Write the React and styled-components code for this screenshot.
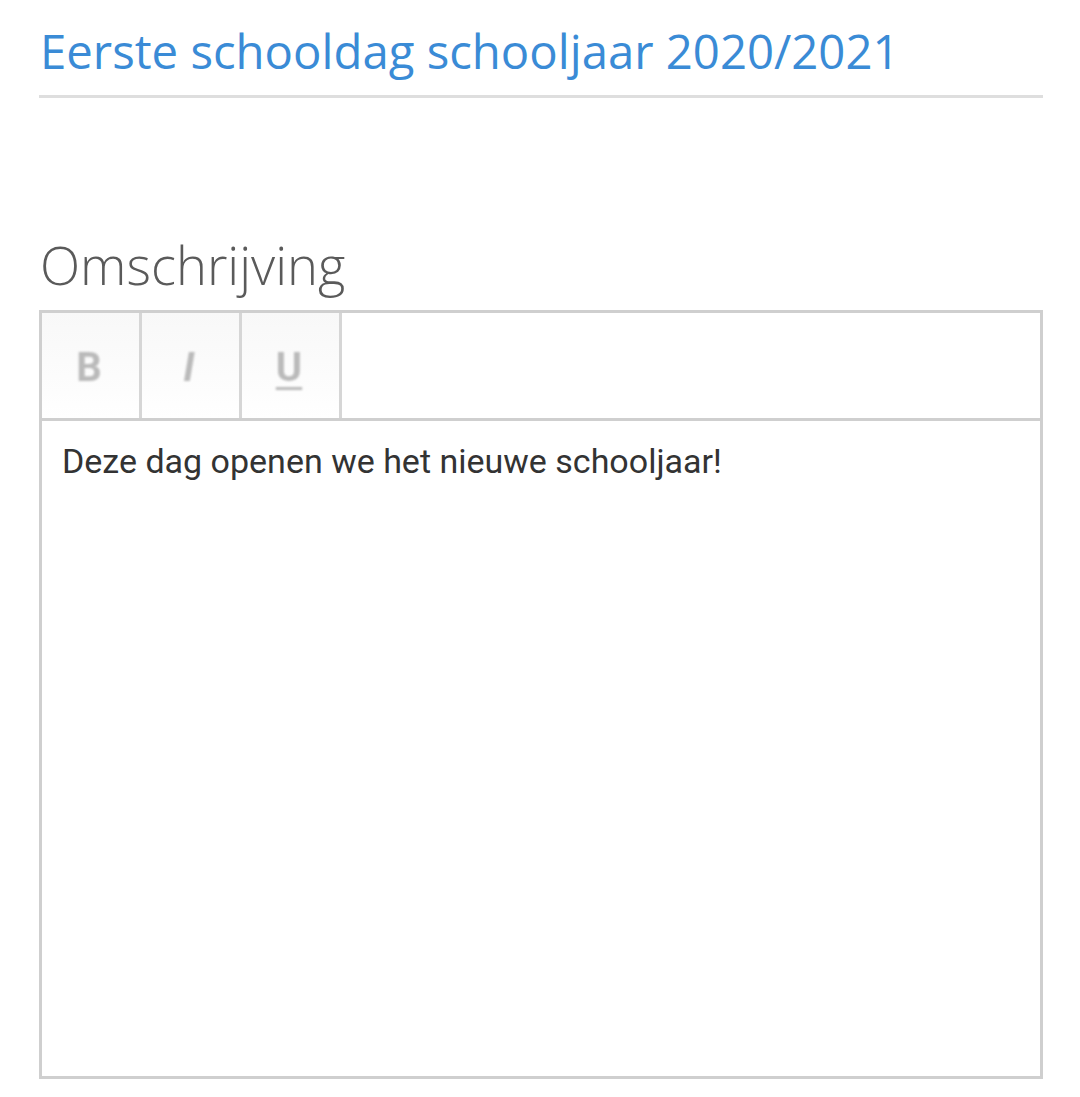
import React from "react";
import styled, { createGlobalStyle } from "styled-components";

const GlobalStyle = createGlobalStyle`
	html, body {
		margin: 0;
		padding: 0;
		background: #fff;
	}
`;

// страница с заголовком и редактором
const Page = styled.div`
	padding: 21px 37px 0 39px;
	font-family: "Open Sans", "Liberation Sans", sans-serif;
`;

const Title = styled.h1`
	margin: 0;
	padding: 0 0 14px 1px;
	font-size: 47.3px;
	line-height: 60px;
	font-weight: 400;
	color: #3a8bd6;
	border-bottom: 3px solid #dedede;
`;

const Label = styled.h2`
	margin: 134px 0 0 0;
	padding-left: 1px;
	font-size: 52.5px;
	line-height: 66px;
	font-weight: 300;
	color: #5a5a5a;
`;

const Editor = styled.div`
	margin-top: 12px;
	height: 769px;
	box-sizing: border-box;
	border: 3px solid #cfcfcf;
	display: flex;
	flex-direction: column;
`;

const Toolbar = styled.div`
	display: flex;
	height: 105px;
	border-bottom: 3px solid #cfcfcf;
`;

const ToolButton = styled.button`
	width: 100px;
	height: 105px;
	padding: 0;
	border: none;
	border-right: 3px solid #d6d6d6;
	background: linear-gradient(#f8f8f8, #fdfdfd 75%, #fff);
	display: flex;
	align-items: center;
	justify-content: center;
	font-family: "Roboto", "Liberation Sans", sans-serif;
	font-size: 40px;
	font-weight: 700;
	font-style: ${({ $italic }) => ($italic ? "italic" : "normal")};
	text-decoration: ${({ $underline }) => ($underline ? "underline" : "none")};
	text-decoration-thickness: 3px;
	text-underline-offset: 6px;
	color: #bababa;
	cursor: pointer;

	span {
		filter: blur(0.8px);
		margin-top: 4px;
		margin-left: -3px;
	}
`;

const Content = styled.div`
	flex: 1;
	padding: 17px 20px;
	font-family: "Roboto", "Liberation Sans", sans-serif;
	font-size: 34px;
	line-height: 1.4;
	color: #333;
`;

export default function App() {
	return (
		<>
			<GlobalStyle />
			<Page>
				<Title>Eerste schooldag schooljaar 2020/2021</Title>
				<Label>Omschrijving</Label>
				<Editor>
					<Toolbar>
						<ToolButton>
							<span>B</span>
						</ToolButton>
						<ToolButton $italic>
							<span>I</span>
						</ToolButton>
						<ToolButton $underline>
							<span>U</span>
						</ToolButton>
					</Toolbar>
					<Content>Deze dag openen we het nieuwe schooljaar!</Content>
				</Editor>
			</Page>
		</>
	);
}
